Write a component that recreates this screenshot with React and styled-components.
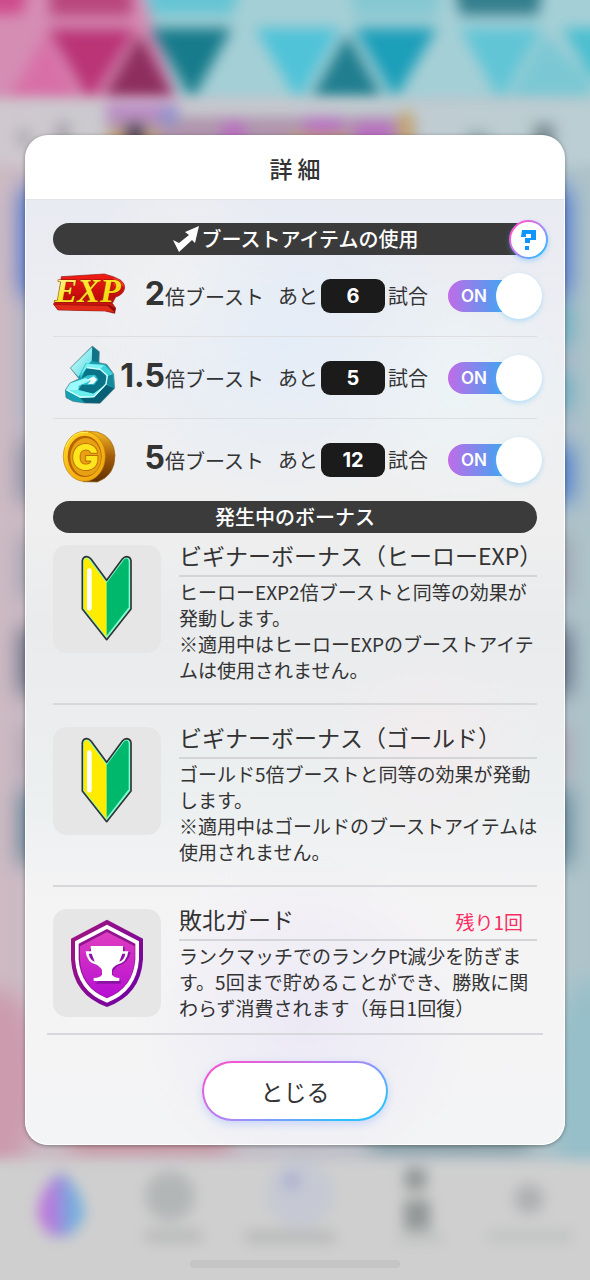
import React, { useState } from "react";
import styled, { createGlobalStyle } from "styled-components";

const GlobalStyle = createGlobalStyle`
  * {
    box-sizing: border-box;
  }

  body {
    margin: 0;
    color: #333;
    font-family: "Noto Sans CJK JP", "Noto Sans", sans-serif;
  }

  button {
    font-family: inherit;
    color: inherit;
    cursor: pointer;
  }
`;

const Page = styled.div`
  position: relative;
  display: flex;
  flex-direction: column;
  min-height: 100vh;
  padding: 135px 25px 12px;
  overflow: hidden;
`;

const Backdrop = styled.svg`
  position: absolute;
  top: 0;
  left: 0;
  width: 100%;
  height: 100%;
  background: #cdcdcd;

  .soft {
    filter: blur(7px);
  }

  .softer {
    filter: blur(11px);
  }
`;

const Panel = styled.main`
  position: relative;
  border-radius: 23px;
  overflow: hidden;
  background: #fff;
  box-shadow: 0 1px 4px rgba(0, 0, 0, 0.35);
`;

const PanelHead = styled.header`
  display: flex;
  align-items: center;
  justify-content: center;
  height: 64px;
  padding-top: 2px;

  h1 {
    margin: 0;
    font-size: 23px;
    font-weight: 500;
    line-height: 32px;
  }
`;

const PanelBody = styled.div`
  padding: 23px 27px;
  border: 1px solid #fff;
  border-top-color: #e2e4ea;
  border-radius: 0 0 23px 23px;
  background: radial-gradient(circle at 52% 87%, rgba(228, 222, 246, 0.5), transparent 170px),
    radial-gradient(circle at 48% 15%, rgba(225, 236, 250, 0.7), transparent 170px),
    radial-gradient(circle at 75% 58%, rgba(249, 234, 236, 0.5), transparent 110px),
    radial-gradient(circle at 30% 9%, rgba(246, 244, 240, 0.7), transparent 110px),
    radial-gradient(circle at 80% 20%, rgba(236, 246, 248, 0.7), transparent 120px),
    linear-gradient(#e9ebf2, #edeff2 20%, #efefef 34%, #e9ebed 45%, #edf0f1 65%, #f5f4f5 75%, #f3f4f5);
`;

const Bar = styled.h2`
  position: relative;
  display: flex;
  align-items: center;
  justify-content: center;
  gap: 2px;
  height: 32px;
  margin: 0;
  border-radius: 16px;
  background: #3b3b3b;
  color: #fff;
  font-size: 20px;
  font-weight: 500;
  line-height: 32px;
`;

const HelpButton = styled.button`
  position: absolute;
  top: -3px;
  right: -11px;
  width: 39px;
  height: 39px;
  padding: 0;
  border: 2px solid transparent;
  border-radius: 50%;
  background: linear-gradient(#fff, #fff) padding-box,
    linear-gradient(135deg, #f45bd8 20%, #a78bfa 55%, #35b8ff 85%) border-box;
  box-shadow: 0 2px 5px rgba(80, 170, 255, 0.4);

  svg {
    display: block;
    margin: 0 auto;
  }
`;

const BoostRow = styled.div`
  display: flex;
  align-items: center;
  height: 82px;
  font-size: 20px;
  border-bottom: 1px solid ${(props) => (props.$last ? "transparent" : "#dedddf")};
`;

const BoostIcon = styled.div`
  flex: 0 0 66px;
  min-width: 0;
  padding-bottom: 6px;

  svg {
    display: block;
    width: 72px;
    height: 60px;
  }
`;

const BoostName = styled.div`
  position: relative;
  flex: 0 0 145px;
  margin-right: 14px;
  text-align: right;
  white-space: nowrap;
  line-height: 40px;

  strong {
    font-family: Inter, sans-serif;
    font-size: 32px;
    font-weight: 700;
  }
`;

const Count = styled.output`
  width: 64px;
  height: 34px;
  margin: 0 3px;
  border-radius: 9px;
  background: #1b1b1b;
  color: #fff;
  font-family: Inter, sans-serif;
  font-weight: 700;
  line-height: 34px;
  text-align: center;
`;

const Switch = styled.label`
  position: relative;
  display: flex;
  align-items: center;
  width: 94px;
  height: 46px;
  margin-left: auto;
  margin-right: -5px;
  cursor: pointer;

  input {
    position: absolute;
    inset: 0;
    width: 100%;
    height: 100%;
    margin: 0;
    opacity: 0;
  }
`;

const Track = styled.span`
  flex: 1;
  height: 32px;
  margin-right: 16px;
  padding: 0 13px;
  border-radius: 16px;
  background: ${(props) => (props.$on ? "linear-gradient(90deg, #c06ce8, #4b9ff0 65%)" : "#b5b5b5")};
  color: #fff;
  font-family: Inter, sans-serif;
  font-size: 17px;
  font-weight: 600;
  line-height: 32px;
  text-align: ${(props) => (props.$on ? "left" : "right")};
`;

const Knob = styled.span`
  position: absolute;
  top: 0;
  ${(props) => (props.$on ? "right: 0;" : "left: 0;")}
  width: 46px;
  height: 46px;
  border-radius: 50%;
  background: #fff;
  box-shadow: 0 2px 5px rgba(90, 190, 255, 0.4);
`;

const BonusList = styled.ul`
  margin: 0;
  padding: 0;
  list-style: none;
`;

const BonusItem = styled.li`
  display: flex;
  gap: 18px;
  padding: 18px 0 20px;
  border-bottom: 2px solid #d6d8db;

  &:first-child {
    padding-top: 8px;
  }

  &:last-child {
    margin: 0 -6px;
    padding: 18px 6px 12px;
  }
`;

const Tile = styled.div`
  flex: 0 0 108px;
  height: 108px;
  margin-top: 4px;
  border-radius: 14px;
  background: #e6e6e6;

  svg {
    display: block;
    width: 100%;
    height: 100%;
  }
`;

const BonusText = styled.div`
  flex: 1;
  min-width: 0;

  p {
    margin: 2px 0 0;
    font-size: 19px;
    line-height: 26px;
    white-space: pre;
  }
`;

const BonusHead = styled.div`
  display: flex;
  justify-content: space-between;
  height: 36px;
  padding-right: 14px;
  border-bottom: 2px solid #d3d5d8;

  h3 {
    margin: 0;
    font-size: 23px;
    font-weight: 400;
    line-height: 28px;
    white-space: nowrap;
  }

  span {
    color: #f82c62;
    font-size: 19px;
    line-height: 34px;
  }
`;

const CloseButton = styled.button`
  display: block;
  width: 186px;
  height: 60px;
  margin: 26px auto 0;
  border: 2px solid transparent;
  border-radius: 30px;
  background: linear-gradient(#fff, #fff) padding-box,
    linear-gradient(155deg, #f056d4 12%, #a98af8 50%, #2fc0fb 85%) border-box;
  box-shadow: 0 3px 8px rgba(120, 160, 255, 0.35);
  font-size: 23px;
  line-height: 52px;
`;

const HomeIndicator = styled.div`
  position: relative;
  width: 210px;
  height: 8px;
  margin: auto auto 0;
  border-radius: 4px;
  background: #c5c5c5;
`;

const BlurredScene = () => (
  <Backdrop viewBox="0 0 590 1280" preserveAspectRatio="none" aria-hidden="true">
    <defs>
      <linearGradient id="wall">
        <stop offset="0" stopColor="#cfb9c2" />
        <stop offset="0.5" stopColor="#c2c0c9" />
        <stop offset="1" stopColor="#a9c4ca" />
      </linearGradient>
      <linearGradient id="shelf">
        <stop offset="0" stopColor="#d0c8ce" />
        <stop offset="1" stopColor="#b9ced3" />
      </linearGradient>
      <linearGradient id="home">
        <stop offset="0.2" stopColor="#bd74dc" />
        <stop offset="0.8" stopColor="#70b0de" />
      </linearGradient>
    </defs>
    <g className="softer">
      <path fill="url(#wall)" d="M-60-60H650V1340H-60Z" />
      <rect x="20" y="184" width="550" height="116" rx="16" fill="#456fcf" />
      <path fill="#a4b0c7" d="M21 298H569V430H21Z" />
      <path fill="#5faabe" d="M300 305H571V345H300ZM300 375H571V408H300Z" />
      <path fill="#7d889f" d="M20 440H300V502H20Z" />
      <path fill="#4c7bcb" d="M300 445H573V502H300Z" />
      <path fill="#9da1b0" d="M20 535H570V600H20Z" />
      <path fill="#5c667e" d="M20 628H570V695H20Z" />
      <path fill="#aba4b2" d="M20 725H570V780H20Z" />
      <path fill="#598093" d="M20 790H570V864H20Z" />
      <ellipse cx="0" cy="1080" rx="40" ry="90" fill="#cc9bae" />
      <ellipse cx="590" cy="1090" rx="40" ry="110" fill="#97bfc9" />
      <path fill="#c9929f" d="M70 1125H230V1155H70Z" />
      <path fill="#829ca6" d="M370 1125H530V1155H370Z" />
    </g>
    <g className="soft">
      <path fill="#a5cfd6" d="M-30-30H620V101H-30Z" />
      <path fill="#d58db4" d="M-30-30H135L178 101H-30Z" />
      <path fill="#cf4b8b" d="M-30-30H32L22 14H-30Z" />
      <path fill="#b9477e" d="M50-30H132V16H50Z" />
      <path fill="#66c5d3" d="M142-30H246L232 15H152Z" />
      <path fill="#86c8d2" d="M345-30H446L436 17H355Z" />
      <path fill="#347e8d" d="M452-30H546L538 15H460Z" />
      <path fill="#d870a7" d="M46 34L10 97H78Z" />
      <path fill="#ba3476" d="M48 29H136L90 101Z" />
      <path fill="#8d2e5f" d="M140 34L104 97H174Z" />
      <path fill="#177b8b" d="M150 28H232L192 100Z" />
      <path fill="#50c3d8" d="M255 28H340L298 101Z" />
      <path fill="#207e8f" d="M347 34L312 97H382Z" />
      <path fill="#1c9fb9" d="M354 28H437L395 99Z" />
      <path fill="#61c5d6" d="M460 28H542L500 101Z" />
      <path fill="#7bc8d4" d="M545 34L510 97H590V80Z" />
      <path fill="#4cbfd0" d="M562 28H620V90L590 75Z" />
    </g>
    <g className="soft">
      <path fill="url(#shelf)" d="M-30 101H620V165H-30Z" />
      <path fill="#b094ad" d="M108 117H415V150H108Z" />
      <path fill="#bc8bc7" d="M106 103H178V118H106Z" />
      <path fill="#8e94cf" d="M160 108H178V124H160Z" />
      <path fill="#c8a865" d="M108 132H125V155H108ZM145 132H158V155H145ZM290 136H350V155H290ZM400 112H412V155H400Z" />
      <path fill="#4c4054" d="M127 124H143V155H127Z" />
      <path fill="#b86fc0" d="M222 122H245V145H222ZM305 118H342V134H305ZM355 122H392V155H355Z" />
      <path fill="#aaa4ad" d="M18 130H30V146H18ZM56 122H70V148H56Z" />
      <path fill="#9aaeb2" d="M466 131H490V147H466Z" />
      <path fill="#7b8d92" d="M534 124H554V150H534Z" />
    </g>
    <g className="soft">
      <path fill="#cfcfcf" d="M-30 1160H620V1310H-30Z" />
      <circle cx="300" cy="1194" r="34" fill="#c6c9d3" />
      <circle cx="292" cy="1181" r="9" fill="#acafd0" />
      <path fill="url(#home)" d="M61 1172Q84 1190 84 1218L70 1236H50L38 1218Q38 1188 61 1172Z" />
      <circle cx="170" cy="1196" r="25" fill="#b3b6b7" />
      <path fill="#b7b8b8" d="M145 1230H202V1242H145ZM245 1231H335V1243H245Z" />
      <path fill="#919696" d="M405 1168H426V1190H405ZM404 1200H430V1230H404Z" />
      <circle cx="529" cy="1199" r="15" fill="#aeb1b3" />
      <path fill="#bfc1c1" d="M398 1234H443V1243H398ZM488 1231H572V1242H488Z" />
    </g>
  </Backdrop>
);

const ArrowIcon = () => (
  <svg width="28" height="28" viewBox="0 0 28 28" aria-hidden="true">
    <path fill="#fff" d="M27 1L23 18L20 15L7 27L1 15L7 18L17 10L13 7Z" />
  </svg>
);

const QuestionIcon = () => (
  <svg width="17" height="22" viewBox="0 0 17 22" aria-hidden="true">
    <path fill="#1095fb" d="M2 1H16V11H10V14H5V9H11V5H6V8H1ZM5 17H9V21H5Z" />
  </svg>
);

const ExpIcon = () => (
  <svg viewBox="24 3 216 180" aria-hidden="true">
    <defs>
      <linearGradient id="expSide" x2="0" y2="1">
        <stop offset="0" stopColor="#f51d14" />
        <stop offset="0.6" stopColor="#c20b0b" />
        <stop offset="1" stopColor="#d92218" />
      </linearGradient>
      <linearGradient id="expFace" x2="1" y2="1">
        <stop offset="0" stopColor="#fff6bd" />
        <stop offset="0.4" stopColor="#ffe931" />
        <stop offset="1" stopColor="#f0ce00" />
      </linearGradient>
    </defs>
    <path
      fill="url(#expSide)"
      stroke="#8b1712"
      strokeWidth="2"
      d="M49 44L178 36L205 44L226 54Q242 66 238 82Q233 99 212 105L202 124L212 138L209 154L180 147L39 144L25 126L42 108Z"
    />
    <path fill="#8e0808" d="M27 128L190 128L211 139L209 153L180 146L39 143Z" />
    <path fill="#e02b1b" d="M28 129L188 131L209 151L180 147L40 143Z" />
    <path fill="#ff3929" d="M205 47Q238 55 237 76Q230 65 207 72Z" />
    <text
      x="29"
      y="119"
      fill="url(#expFace)"
      stroke="#8c1a00"
      strokeWidth="3"
      paintOrder="stroke"
      fontFamily="Liberation Serif, serif"
      fontSize="102"
      fontWeight="700"
      fontStyle="italic"
    >
      EXP
    </text>
  </svg>
);

const GemIcon = () => (
  <svg viewBox="24 249 216 180" aria-hidden="true">
    <defs>
      <linearGradient id="gemTop" x2="1" y2="1">
        <stop offset="0" stopColor="#e0ffff" />
        <stop offset="1" stopColor="#4fdbe2" />
      </linearGradient>
    </defs>
    <path
      fill="#159aac"
      stroke="#5f7a7f"
      strokeWidth="2"
      d="M142 252L163 269L162 302L185 307L206 336L209 379L165 424L119 423L84 418L63 407L61 384L75 363L102 350L76 318Z"
    />
    <path fill="url(#gemTop)" d="M142 254L140 296L120 318L100 344L77 318Z" />
    <path fill="#0f7286" d="M142 254L162 270L160 301L141 296Z" />
    <path fill="#2fc3cf" d="M122 304L180 308L205 337L208 378L165 408L105 408L62 385L76 364L108 351L104 336Z" />
    <path fill="#0b7388" d="M124 318L164 324L184 340L182 368L145 395L100 384L110 368L148 368L160 352L150 338L128 340L108 351Z" />
    <path fill="#7ff3f3" d="M124 305L178 309L166 322L126 317L106 340Z" />
    <path fill="#3fd4dc" d="M178 309L204 337L188 342L166 322Z" />
    <path fill="#15889b" d="M204 337L208 378L184 366L188 342Z" />
    <path fill="#085f76" d="M208 378L165 423L119 422L105 408L148 406L184 368Z" />
    <path fill="#6beeee" d="M62 385L100 384L145 395L183 368L147 406L105 408Z" />
    <path fill="#9dfbfb" d="M76 364L123 348L135 357L101 371L100 384L62 385Z" />
    <path fill="#159fb0" d="M62 386L105 408L119 422L84 417L64 406Z" />
    <path fill="none" stroke="#d8ffff" strokeWidth="4" d="M66 384L106 405L147 404L183 366L187 341L166 322L126 317" />
    <path fill="#f0ffff" d="M126 353L146 343L156 353L145 365L128 367L138 356Z" />
  </svg>
);

const CoinIcon = () => (
  <svg viewBox="24 495 216 180" aria-hidden="true">
    <defs>
      <linearGradient id="coinFace" x2="1" y2="1">
        <stop offset="0" stopColor="#ffdf25" />
        <stop offset="0.5" stopColor="#f5b616" />
        <stop offset="1" stopColor="#eda60e" />
      </linearGradient>
      <linearGradient id="coinSide" x2="0" y2="1">
        <stop offset="0" stopColor="#f5ba23" />
        <stop offset="0.5" stopColor="#a35c0b" />
        <stop offset="1" stopColor="#603100" />
      </linearGradient>
    </defs>
    <path
      fill="url(#coinSide)"
      stroke="#986a1c"
      strokeWidth="2"
      d="M116 507L158 510Q208 527 210 580Q210 641 157 660L114 659Z"
    />
    <ellipse cx="118" cy="583" rx="63" ry="75" fill="url(#coinFace)" stroke="#c47a09" strokeWidth="2" />
    <ellipse cx="119" cy="583" rx="51" ry="62" fill="#b76205" />
    <ellipse cx="122" cy="585" rx="46" ry="57" fill="#e9a114" />
    <path fill="none" stroke="#fff050" strokeWidth="3" d="M61 556Q82 505 129 511" />
    <text
      x="121"
      y="624"
      fill="#ffe51d"
      stroke="#b16400"
      strokeWidth="5"
      paintOrder="stroke"
      fontFamily="Inter, sans-serif"
      fontSize="108"
      fontWeight="800"
      textAnchor="middle"
    >
      G
    </text>
  </svg>
);

const BeginnerIcon = () => (
  <svg viewBox="42 437 324 324" aria-hidden="true">
    <path
      fill="#7fffd2"
      stroke="#333"
      strokeWidth="5"
      strokeLinejoin="round"
      d="M130 484Q132 472 143 472Q150 472 156 479L203 543L250 479Q256 472 263 472Q274 473 276 484V629L203 721L130 629Z"
    />
    <path fill="#ffec00" d="M134 484Q138 474 148 478L203 551V714L134 627Z" />
    <path fill="#00b86b" d="M203 551L256 480Q268 473 269 487V624L203 709Z" />
    <path fill="none" stroke="#fff" strokeWidth="14" strokeLinecap="round" d="M151 514V627" />
  </svg>
);

const ShieldIcon = () => (
  <svg viewBox="42 54 324 324" aria-hidden="true">
    <defs>
      <linearGradient id="shieldRim" x2="1" y2="1">
        <stop offset="0" stopColor="#a3177d" />
        <stop offset="1" stopColor="#6c00a7" />
      </linearGradient>
      <linearGradient id="shieldFace" x2="0" y2="1">
        <stop offset="0" stopColor="#df3ec0" />
        <stop offset="1" stopColor="#b60ed3" />
      </linearGradient>
    </defs>
    <path fill="url(#shieldRim)" d="M204 86L312 143V205Q305 312 204 348Q102 312 96 205V143Z" />
    <path fill="#fff" d="M204 101L300 151V205Q293 302 204 335Q115 302 108 205V151Z" />
    <path fill="#8f148e" d="M204 114L289 158V205Q283 291 204 322Q125 291 119 205V158Z" />
    <path fill="url(#shieldFace)" d="M204 123L287 166V207Q280 290 204 320Q129 289 123 207V166Z" />
    <path
      fill="#8a13a3"
      d="M158 169H257V184H275Q269 218 235 226L221 242V258L245 266V278H169L195 258V242L180 226Q148 218 144 190Z"
    />
    <path
      fill="#fff"
      fillRule="evenodd"
      d="M155 165H252V181H268Q264 216 232 222Q219 231 219 238V251Q224 260 241 261V270H164V261Q185 259 189 251V238Q187 231 174 222Q143 216 140 181H156ZM149 188Q153 207 167 212L158 188ZM250 188L241 212Q255 208 259 188Z"
    />
  </svg>
);

const boosts = [
  { id: "exp", icon: <ExpIcon />, rate: "2", left: 6 },
  { id: "gem", icon: <GemIcon />, rate: "1.5", left: 5 },
  { id: "gold", icon: <CoinIcon />, rate: "5", left: 12 },
];

const bonuses = [
  {
    title: "ビギナーボーナス（ヒーローEXP）",
    icon: <BeginnerIcon />,
    text: "ヒーローEXP2倍ブーストと同等の効果が\n発動します。\n※適用中はヒーローEXPのブーストアイテ\nムは使用されません。",
  },
  {
    title: "ビギナーボーナス（ゴールド）",
    icon: <BeginnerIcon />,
    text: "ゴールド5倍ブーストと同等の効果が発動\nします。\n※適用中はゴールドのブーストアイテムは\n使用されません。",
  },
  {
    title: "敗北ガード",
    icon: <ShieldIcon />,
    remain: "残り1回",
    text: "ランクマッチでのランクPt減少を防ぎま\nす。5回まで貯めることができ、勝敗に関\nわらず消費されます（毎日1回復）",
  },
];

const Boost = ({ icon, rate, left, last }) => {
  const [on, setOn] = useState(true);

  return (
    <BoostRow $last={last}>
      <BoostIcon>{icon}</BoostIcon>
      <BoostName>
        <strong>{rate}</strong>倍ブースト
      </BoostName>
      <span>あと</span>
      <Count>{left}</Count>
      <span>試合</span>
      <Switch>
        <input type="checkbox" checked={on} onChange={() => setOn(!on)} />
        <Track $on={on}>{on ? "ON" : "OFF"}</Track>
        <Knob $on={on} />
      </Switch>
    </BoostRow>
  );
};

const App = () => {
  return (
    <Page>
      <GlobalStyle />
      <BlurredScene />
      <Panel>
        <PanelHead>
          <h1>詳 細</h1>
        </PanelHead>
        <PanelBody>
          <Bar>
            <ArrowIcon />
            ブーストアイテムの使用
            <HelpButton type="button" aria-label="ヘルプ">
              <QuestionIcon />
            </HelpButton>
          </Bar>
          {boosts.map((boost, i) => (
            <Boost key={boost.id} {...boost} last={i === boosts.length - 1} />
          ))}
          <Bar>発生中のボーナス</Bar>
          <BonusList>
            {bonuses.map((bonus) => (
              <BonusItem key={bonus.title}>
                <Tile>{bonus.icon}</Tile>
                <BonusText>
                  <BonusHead>
                    <h3>{bonus.title}</h3>
                    {bonus.remain && <span>{bonus.remain}</span>}
                  </BonusHead>
                  <p>{bonus.text}</p>
                </BonusText>
              </BonusItem>
            ))}
          </BonusList>
          <CloseButton type="button">とじる</CloseButton>
        </PanelBody>
      </Panel>
      <HomeIndicator />
    </Page>
  );
};

export default App;
